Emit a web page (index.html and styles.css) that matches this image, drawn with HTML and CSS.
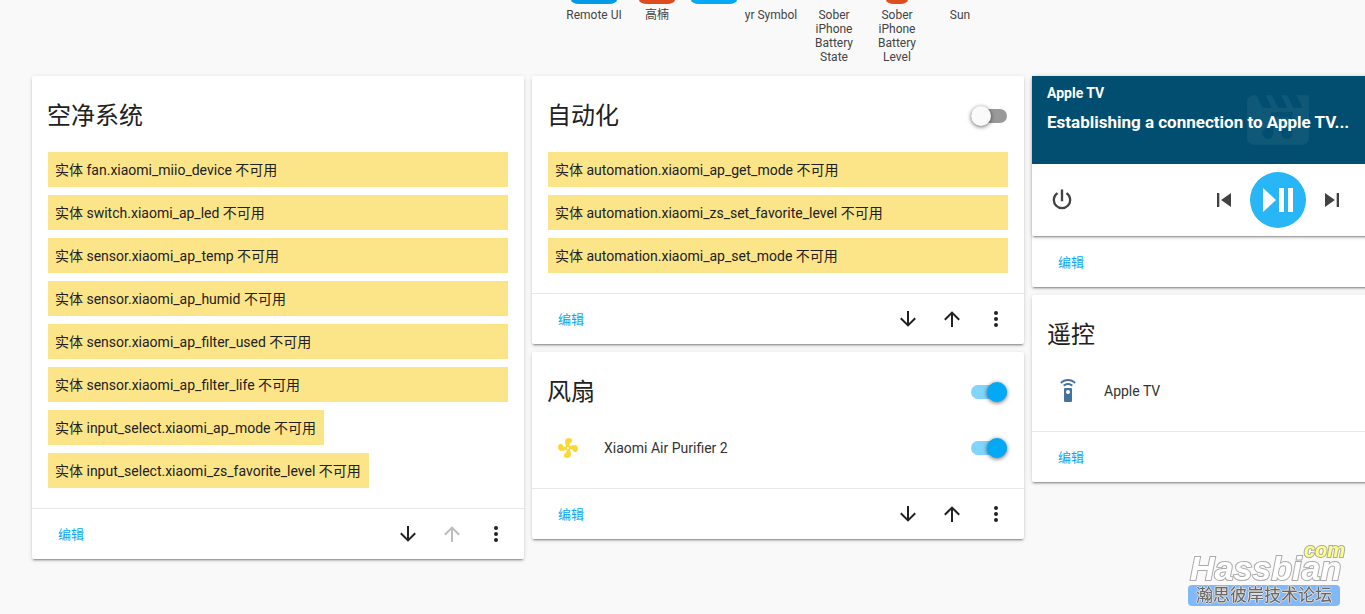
FILE: index.html
```html
<!DOCTYPE html>
<html lang="zh-CN">
<head>
<meta charset="utf-8">
<title>Home Assistant</title>
<link rel="stylesheet" href="styles.css">
</head>
<body>
<svg class="defs" aria-hidden="true">
  <symbol id="down" viewBox="0 0 24 24"><path d="M11,4H13V16L18.5,10.5L19.92,11.92L12,19.84L4.08,11.92L5.5,10.5L11,16V4Z"/></symbol>
  <symbol id="up" viewBox="0 0 24 24"><path d="M13,20H11V8L5.5,13.5L4.08,12.08L12,4.16L19.92,12.08L18.5,13.5L13,8V20Z"/></symbol>
  <symbol id="dots" viewBox="0 0 24 24"><path d="M12,16A2,2 0 0,1 14,18A2,2 0 0,1 12,20A2,2 0 0,1 10,18A2,2 0 0,1 12,16M12,10A2,2 0 0,1 14,12A2,2 0 0,1 12,14A2,2 0 0,1 10,12A2,2 0 0,1 12,10M12,4A2,2 0 0,1 14,6A2,2 0 0,1 12,8A2,2 0 0,1 10,6A2,2 0 0,1 12,4Z"/></symbol>
</svg>
<div class="dashboard">
  <header class="badges">
    <div class="badge"><span class="pill pill-blue"></span><span>Remote UI</span></div>
    <div class="badge"><span class="pill pill-red"></span><span>高楠</span></div>
    <div class="badge badge-narrow"><span class="pill pill-light"></span></div>
    <div class="badge"><span class="pill"></span><span>yr Symbol</span></div>
    <div class="badge"><span class="pill"></span><span>Sober iPhone Battery State</span></div>
    <div class="badge"><span class="pill pill-red pill-small"></span><span>Sober iPhone Battery Level</span></div>
    <div class="badge"><span class="pill"></span><span>Sun</span></div>
  </header>
  <main class="columns">
    <div class="column">
      <section class="card">
        <div class="card-header"><h2>空净系统</h2></div>
        <div class="card-content">
          <div class="warning">实体 fan.xiaomi_miio_device 不可用</div>
          <div class="warning">实体 switch.xiaomi_ap_led 不可用</div>
          <div class="warning">实体 sensor.xiaomi_ap_temp 不可用</div>
          <div class="warning">实体 sensor.xiaomi_ap_humid 不可用</div>
          <div class="warning">实体 sensor.xiaomi_ap_filter_used 不可用</div>
          <div class="warning">实体 sensor.xiaomi_ap_filter_life 不可用</div>
          <div class="warning warning-fit">实体 input_select.xiaomi_ap_mode 不可用</div>
          <div class="warning warning-fit">实体 input_select.xiaomi_zs_favorite_level 不可用</div>
        </div>
        <footer class="card-actions">
          <button class="edit">编辑</button>
          <div class="tools">
            <button class="icon-button" aria-label="下移"><svg><use href="#down"/></svg></button>
            <button class="icon-button" aria-label="上移" disabled><svg><use href="#up"/></svg></button>
            <button class="icon-button" aria-label="更多"><svg><use href="#dots"/></svg></button>
          </div>
        </footer>
      </section>
    </div>
    <div class="column">
      <section class="card">
        <div class="card-header"><h2>自动化</h2><input class="toggle" type="checkbox" aria-label="自动化"></div>
        <div class="card-content">
          <div class="warning">实体 automation.xiaomi_ap_get_mode 不可用</div>
          <div class="warning">实体 automation.xiaomi_zs_set_favorite_level 不可用</div>
          <div class="warning">实体 automation.xiaomi_ap_set_mode 不可用</div>
        </div>
        <footer class="card-actions">
          <button class="edit">编辑</button>
          <div class="tools">
            <button class="icon-button" aria-label="下移"><svg><use href="#down"/></svg></button>
            <button class="icon-button" aria-label="上移"><svg><use href="#up"/></svg></button>
            <button class="icon-button" aria-label="更多"><svg><use href="#dots"/></svg></button>
          </div>
        </footer>
      </section>
      <section class="card">
        <div class="card-header"><h2>风扇</h2><input class="toggle" type="checkbox" aria-label="风扇" checked></div>
        <div class="card-content">
          <div class="entity">
            <svg class="entity-icon icon-fan" viewBox="0 0 24 24"><path d="M12,11A1,1 0 0,0 11,12A1,1 0 0,0 12,13A1,1 0 0,0 13,12A1,1 0 0,0 12,11M12.5,2C17,2 17.11,5.57 14.75,6.75C13.76,7.24 13.32,8.29 13.13,9.22C13.61,9.42 14.03,9.73 14.35,10.13C18.05,8.13 22.03,8.92 22.03,12.5C22.03,17 18.46,17.1 17.28,14.73C16.78,13.74 15.72,13.3 14.79,13.11C14.59,13.59 14.28,14 13.88,14.34C15.87,18.03 15.08,22 11.5,22C7,22 6.91,18.42 9.27,17.24C10.25,16.75 10.69,15.71 10.89,14.79C10.4,14.59 9.97,14.27 9.65,13.87C5.96,15.85 2,15.07 2,11.5C2,7 5.56,6.89 6.74,9.26C7.24,10.25 8.29,10.68 9.22,10.87C9.41,10.39 9.73,9.97 10.14,9.65C8.15,5.96 8.94,2 12.5,2Z"/></svg>
            <label class="entity-name" for="purifier">Xiaomi Air Purifier 2</label>
            <input class="toggle" type="checkbox" id="purifier" checked>
          </div>
        </div>
        <footer class="card-actions">
          <button class="edit">编辑</button>
          <div class="tools">
            <button class="icon-button" aria-label="下移"><svg><use href="#down"/></svg></button>
            <button class="icon-button" aria-label="上移"><svg><use href="#up"/></svg></button>
            <button class="icon-button" aria-label="更多"><svg><use href="#dots"/></svg></button>
          </div>
        </footer>
      </section>
    </div>
    <div class="column">
      <section class="card">
        <div class="media">
          <div class="media-banner">
            <svg class="media-art" viewBox="0 0 24 24"><path fill-rule="evenodd" d="M18,4L20,8H17L15,4H13L15,8H12L10,4H8L10,8H7L5,4H4A2,2 0 0,0 2,6V18A2,2 0 0,0 4,20H20A2,2 0 0,0 22,18V4H18ZM9.7,9.4H16.7V16.2A1.8,1.8 0 1,1 15.7,14.7V11.1H10.5V16.2A1.8,1.8 0 1,1 9.7,14.8Z"/></svg>
            <div class="media-name">Apple TV</div>
            <div class="media-title">Establishing a connection to Apple TV...</div>
          </div>
          <div class="media-controls">
            <button class="media-button" aria-label="电源"><svg viewBox="0 0 24 24"><path d="M16.56,5.44L15.11,6.89C16.84,7.94 18,9.83 18,12A6,6 0 0,1 12,18A6,6 0 0,1 6,12C6,9.83 7.16,7.94 8.88,6.88L7.44,5.44C5.36,6.88 4,9.28 4,12A8,8 0 0,0 12,20A8,8 0 0,0 20,12C20,9.28 18.64,6.88 16.56,5.44M13,3H11V13H13"/></svg></button>
            <div class="playback">
              <button class="media-button" aria-label="上一个"><svg viewBox="0 0 24 24"><path d="M6,18V6H8V18H6M9.5,12L18,6V18L9.5,12Z"/></svg></button>
              <button class="play-button" aria-label="播放/暂停"><svg viewBox="0 0 56 56"><path d="M13,16V40L26,28ZM29,16H34V40H29ZM38,16H43V40H38Z"/></svg></button>
              <button class="media-button" aria-label="下一个"><svg viewBox="0 0 24 24"><path d="M16,18H18V6H16M6,18L14.5,12L6,6V18Z"/></svg></button>
            </div>
          </div>
        </div>
        <footer class="card-actions card-actions-plain"><button class="edit">编辑</button></footer>
      </section>
      <section class="card">
        <div class="card-header"><h2>遥控</h2></div>
        <div class="card-content">
          <div class="entity">
            <svg class="entity-icon icon-remote" viewBox="0 0 24 24"><path d="M12,0C8.96,0 6.21,1.23 4.22,3.22L5.63,4.63C7.26,3 9.5,2 12,2C14.5,2 16.74,3 18.36,4.64L19.77,3.23C17.79,1.23 15.04,0 12,0M7.05,6.05L8.46,7.46C9.37,6.56 10.62,6 12,6C13.38,6 14.63,6.56 15.54,7.46L16.95,6.05C15.68,4.78 13.93,4 12,4C10.07,4 8.32,4.78 7.05,6.05M12,15A2,2 0 0,1 10,13A2,2 0 0,1 12,11A2,2 0 0,1 14,13A2,2 0 0,1 12,15M15,9H9A1,1 0 0,0 8,10V22A1,1 0 0,0 9,23H15A1,1 0 0,0 16,22V10A1,1 0 0,0 15,9Z"/></svg>
            <span class="entity-name">Apple TV</span>
          </div>
        </div>
        <footer class="card-actions"><button class="edit">编辑</button></footer>
      </section>
    </div>
  </main>
</div>
<div class="watermark">
  <div class="watermark-com">com</div>
  <div class="watermark-name">Hassbian</div>
  <div class="watermark-forum">瀚思彼岸技术论坛</div>
</div>
</body>
</html>
```
FILE: styles.css
```css
* { box-sizing: border-box; }

body {
  margin: 0;
  min-height: 100vh;
  overflow: hidden;
  background: #f9f9f9;
  color: #212121;
  font: 14px/20px Roboto, "Noto Sans CJK SC", sans-serif;
}

button {
  padding: 0;
  border: 0;
  background: none;
  font: inherit;
  cursor: pointer;
}

.defs { display: none; }

.dashboard {
  min-width: 1556px;
  padding: 0 32px;
}

/* badges */
.badges {
  display: flex;
  justify-content: center;
  height: 76px;
  padding-right: 2px;
  font-size: 12px;
  line-height: 14px;
  text-align: center;
  color: #444;
}

.badge {
  display: flex;
  flex-direction: column;
  align-items: center;
  gap: 4px;
  width: 63px;
  padding: 0 8px;
}

.badge:first-child { padding: 0; }
.badge:nth-child(4) { padding: 0; }
.badge-narrow { width: 51px; padding: 0; }

.pill {
  width: 46px;
  height: 4px;
  border-radius: 0 0 8px 8px / 0 0 4px 4px;
}

.pill-blue { background: #039be5; }
.pill-light { background: #03a9f4; }
.pill-red { width: 36px; background: #df4c1e; }
.pill-small { width: 22px; }

/* cards */
.columns {
  display: grid;
  grid-template-columns: repeat(3, minmax(492px, 1fr));
  gap: 8px;
}

.column {
  display: flex;
  flex-direction: column;
  gap: 8px;
}

.card,
.media {
  background: #fff;
  border-radius: 2px;
  box-shadow: 0 2px 2px 0 rgba(0, 0, 0, .14), 0 1px 5px 0 rgba(0, 0, 0, .12), 0 3px 1px -2px rgba(0, 0, 0, .2);
}

.card-header {
  display: flex;
  align-items: center;
  justify-content: space-between;
  padding: 20px 16px 16px 15px;
}

.card-header h2 {
  margin: 0;
  font-size: 24px;
  font-weight: 400;
  line-height: 40px;
}

.card-content {
  display: flex;
  flex-direction: column;
  gap: 8px;
  padding: 0 16px 20px;
}

.warning {
  padding: 9px 8px 7px 7px;
  background: #fce588;
  color: #212121;
  line-height: 19px;
}

.warning-fit { align-self: flex-start; }

.entity {
  display: flex;
  align-items: center;
  height: 40px;
}

.entity-icon {
  width: 24px;
  height: 24px;
  margin: 0 24px 0 8px;
}

.icon-fan { fill: #fdd835; }
.icon-remote { fill: #44739e; }
.entity-name { flex: 1; color: #333; }

.card-actions {
  display: flex;
  align-items: center;
  justify-content: space-between;
  height: 51px;
  padding: 0 8px 0 26px;
  border-top: 1px solid #e8e8e8;
}

.card-actions-plain { border-top-color: transparent; }

.edit {
  padding-top: 2px;
  color: #03a9f4;
  font-size: 13px;
}

.tools { display: flex; gap: 4px; }

.icon-button {
  display: grid;
  place-items: center;
  width: 40px;
  height: 40px;
}

.icon-button svg { width: 24px; height: 24px; fill: #212121; }
.icon-button:disabled svg { fill: #bdbdbd; }

.toggle {
  appearance: none;
  display: flex;
  align-items: center;
  width: 36px;
  height: 14px;
  margin: 0 1px 0 0;
  border-radius: 7px;
  background: #999;
}

.toggle::before {
  content: "";
  flex: none;
  width: 20px;
  height: 20px;
  border-radius: 50%;
  background: #fafafa;
  box-shadow: 0 1px 4px rgba(0, 0, 0, .6);
}

.toggle:checked { justify-content: flex-end; background: #81d4fa; }
.toggle:checked::before { background: #03a9f4; }

/* media player */
.media-banner {
  position: relative;
  height: 88px;
  padding: 7px 15px;
  background: #024e70;
  color: #fff;
  font-weight: 700;
}

.media-art {
  position: absolute;
  inset: 7px 0 0;
  width: 74px;
  height: 74px;
  margin: 0 auto;
  fill: rgba(255, 255, 255, .06);
}

.media-name,
.media-title { position: relative; }

.media-title {
  margin-top: 7px;
  font-size: 17px;
  line-height: 24px;
}

.media-controls {
  display: grid;
  grid-template-columns: 1fr auto 1fr;
  align-items: center;
  padding: 8px 9px 8px 8px;
}

.playback {
  display: flex;
  align-items: center;
  gap: 4px;
}

.media-button {
  display: grid;
  place-items: center;
  width: 44px;
  height: 44px;
}

.media-button svg { width: 28px; height: 28px; fill: #424242; }

.play-button {
  width: 56px;
  height: 56px;
  border-radius: 50%;
  background: #29b6f6;
}

.play-button svg { display: block; fill: #fff; }

/* watermark */
.watermark {
  position: fixed;
  right: 25px;
  bottom: 8px;
  width: 152px;
}

.watermark-name,
.watermark-com {
  font-family: "Liberation Sans", sans-serif;
  font-style: italic;
  font-weight: bold;
  -webkit-text-stroke: 2px #aaa;
  paint-order: stroke fill;
}

.watermark-name {
  padding-left: 2px;
  color: #fff;
  font-size: 34px;
  line-height: 34px;
}

.watermark-com {
  height: 10px;
  margin-right: -5px;
  color: #ffff80;
  font-size: 20px;
  line-height: 18px;
  text-align: right;
}

.watermark-forum {
  border-radius: 4px;
  background: #80b8fa;
  color: #666;
  font-size: 17px;
  line-height: 21px;
  text-align: center;
  text-shadow: 1px 0 #ddd, -1px 0 #ddd, 0 1px #ddd, 0 -1px #ddd;
}
```
